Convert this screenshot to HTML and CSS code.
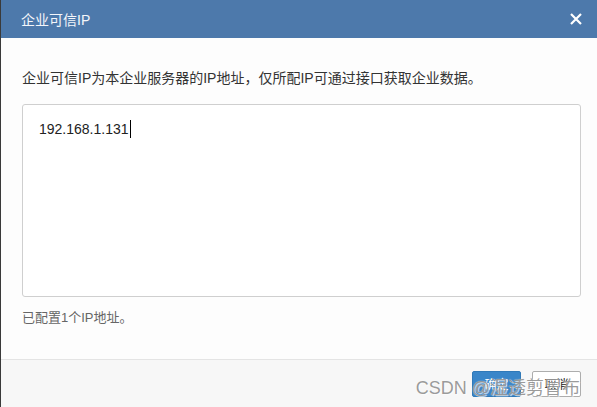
FILE: index.html
```html
<!DOCTYPE html>
<html lang="zh-CN">
<head>
    <meta charset="UTF-8">
    <meta name="viewport" content="width=device-width, initial-scale=1.0">
    <title>企业可信IP</title>
    <link rel="stylesheet" href="styles.css">
</head>
<body>
    <div class="modal">
        <header class="modal-head">
            <h1>企业可信IP</h1>
            <span class="close">
                <svg width="12" height="12" viewBox="0 0 12 12"><path d="M1 1L11 11M11 1L1 11" stroke="#fff" stroke-width="2.2"/></svg>
            </span>
        </header>
        <section class="modal-body">
            <p class="desc">企业可信IP为本企业服务器的IP地址，仅所配IP可通过接口获取企业数据。</p>
            <div class="ip-box">192.168.1.131<span class="caret"></span></div>
            <p class="count">已配置1个IP地址。</p>
        </section>
        <footer class="modal-foot">
            <button class="btn btn-ok">确定</button>
            <button class="btn btn-cancel">取消</button>
            <span class="mark">CSDN @湿透剪冒布</span>
        </footer>
    </div>
</body>
</html>
```

FILE: styles.css
```css
html, body {
    margin: 0;
    height: 100%;
}

body {
    background-color: #3a3a3a;
    font: normal 14px "Liberation Sans", "Noto Sans CJK SC", sans-serif;
    color: #333;
}

.modal {
    margin-left: 1px;
    height: 100%;
    display: flex;
    flex-direction: column;
    background-color: #fdfdfd;
}

.modal-head {
    height: 38px;
    background-color: #4d79ab;
    display: flex;
    align-items: center;
    justify-content: space-between;
    padding: 0 15px 0 20px;
    box-sizing: border-box;
}

.modal-head h1 {
    margin: 0;
    font-size: 14px;
    font-weight: normal;
    color: #f4f6fa;
}

.close {
    display: flex;
    margin-top: -1px;
}

.modal-body {
    flex: 1;
    padding: 30px 16px 0 21px;
}

.desc {
    margin: 0;
    line-height: 20px;
}

.ip-box {
    margin-top: 16px;
    height: 193px;
    box-sizing: border-box;
    border: 1px solid #cfcfcf;
    border-radius: 3px;
    background-color: #fff;
    padding: 14px 16px;
    line-height: 20px;
    color: #222;
}

.caret {
    display: inline-block;
    width: 1px;
    height: 18px;
    background-color: #000;
    vertical-align: -4px;
    margin-left: 1px;
}

.count {
    margin: 11px 0 0;
    font-size: 13px;
    line-height: 20px;
    color: #666;
}

.modal-foot {
    position: relative;
    height: 47px;
    border-top: 1px solid #e4e4e4;
    background-color: #f7f7f7;
    display: flex;
    justify-content: flex-end;
    align-items: center;
    gap: 11px;
    padding: 0 16px 0 0;
}

.btn {
    width: 49px;
    height: 26px;
    font: normal 12px "Liberation Sans", "Noto Sans CJK SC", sans-serif;
    border-radius: 2px;
    padding: 0;
}

.btn-ok {
    background-color: #3a86c9;
    border: 1px solid #3079b8;
    color: #fff;
}

.btn-cancel {
    background-color: #fff;
    border: 1px solid #adadad;
    color: #222;
}

.mark {
    position: absolute;
    right: 17px;
    top: 13px;
    font-size: 18px;
    color: rgba(110, 110, 110, 0.7);
    text-shadow: 0 0 1px #fff, 1px 1px 0 rgba(255, 255, 255, 0.6);
    pointer-events: none;
}
```
